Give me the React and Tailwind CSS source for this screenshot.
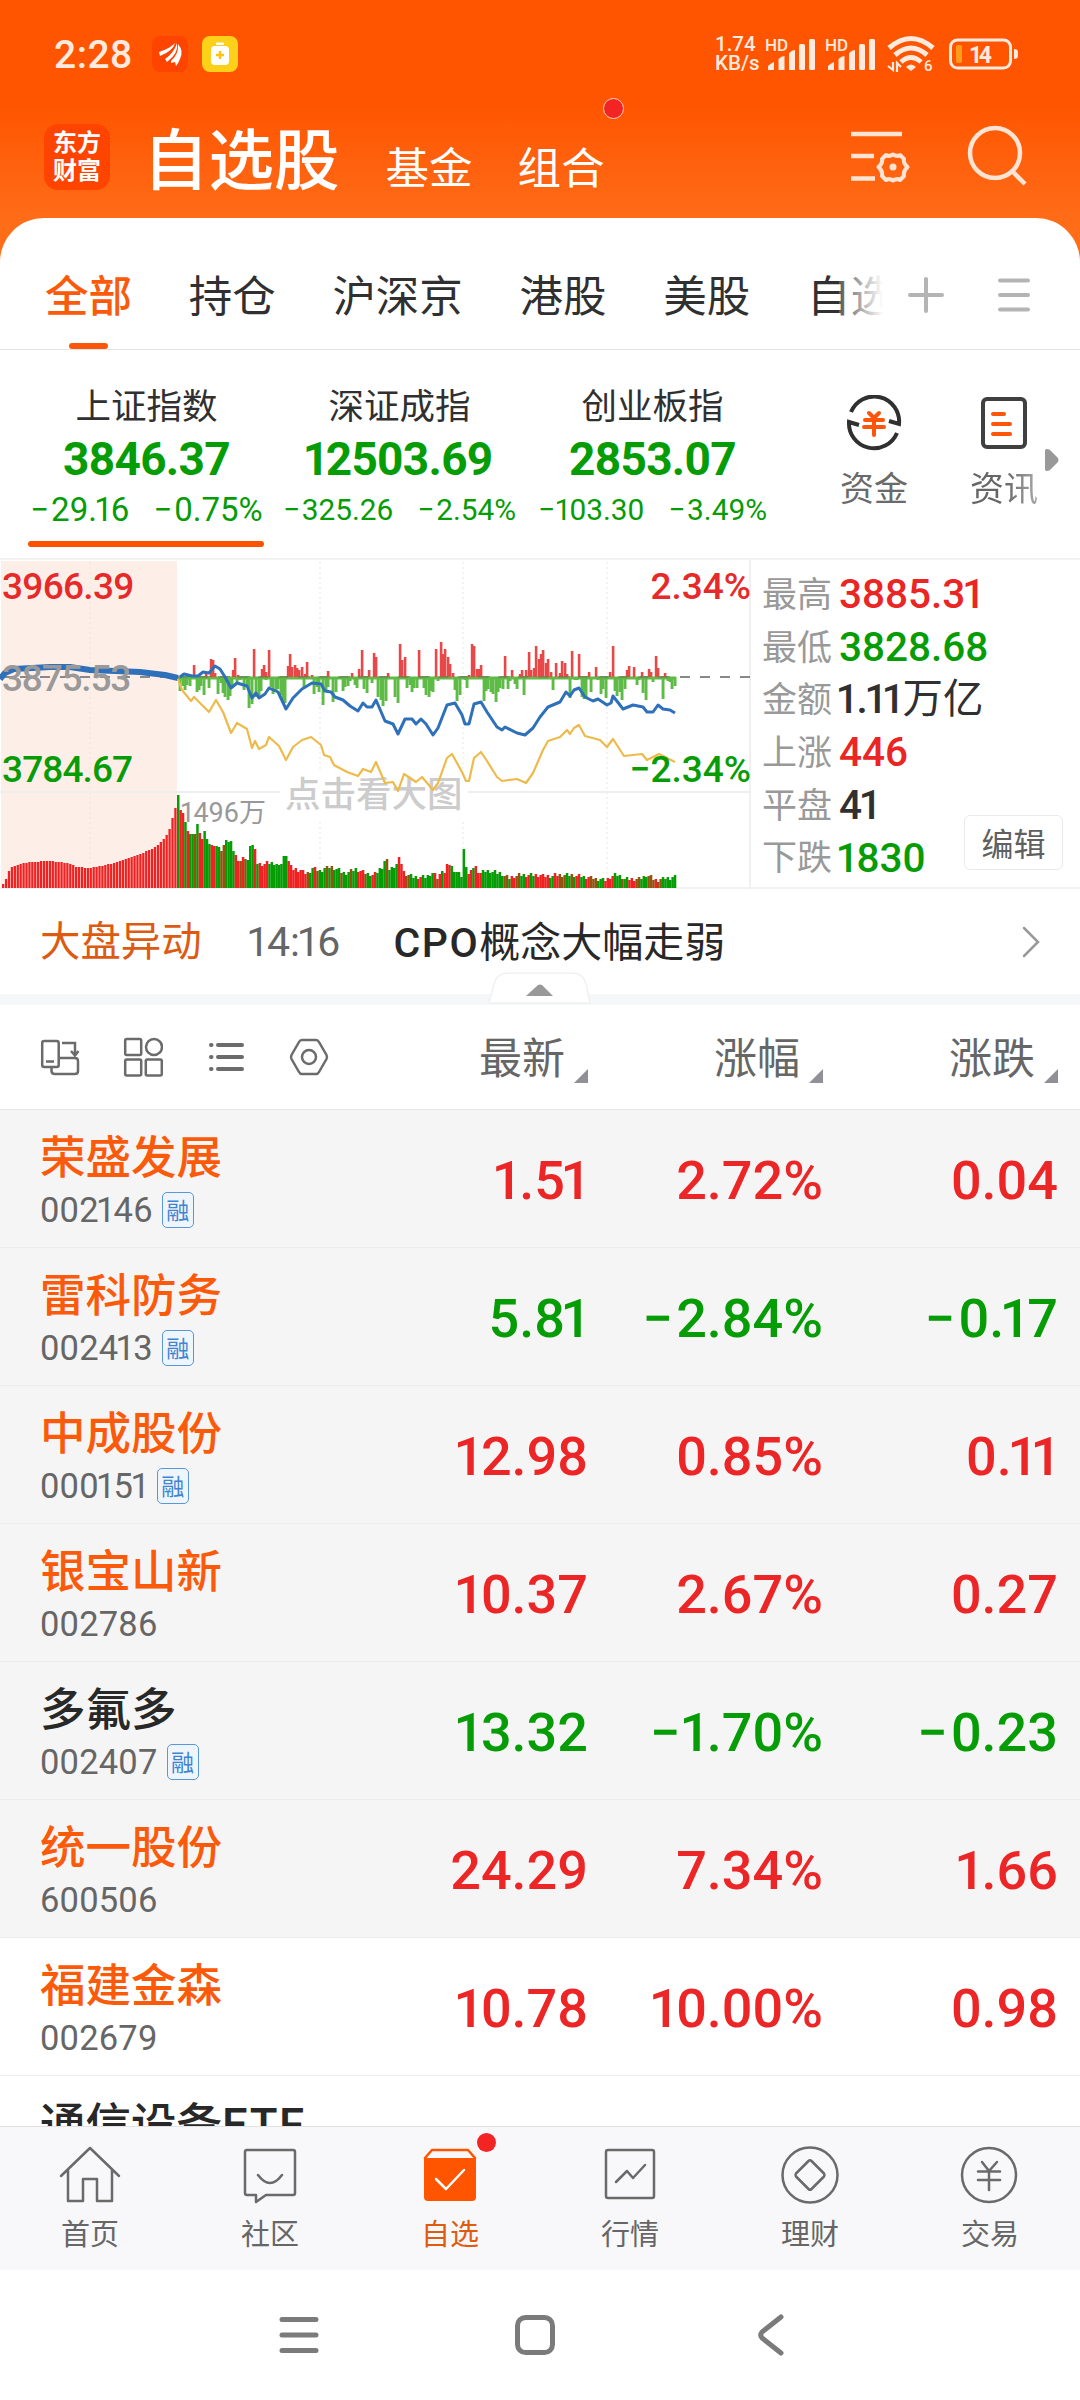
import clsx from 'clsx'

// ── Data ──────────────────────────────────────────────────────
const tabs = ['全部', '持仓', '沪深京', '港股', '美股', '自选']

const indexes = [
  { name: '上证指数', value: '3846.37', diff: '−29.16', pct: '−0.75%', active: true },
  { name: '深证成指', value: '12503.69', diff: '−325.26', pct: '−2.54%' },
  { name: '创业板指', value: '2853.07', diff: '−103.30', pct: '−3.49%' },
]

const stats = [
  { label: '最高', value: '3885.31', color: 'text-[#eb2424]' },
  { label: '最低', value: '3828.68', color: 'text-[#069c06]' },
  { label: '金额', value: '1.11', unit: '万亿', color: 'text-[#303030]' },
  { label: '上涨', value: '446', color: 'text-[#eb2424]' },
  { label: '平盘', value: '41', color: 'text-[#303030]' },
  { label: '下跌', value: '1830', color: 'text-[#069c06]' },
]

const stocks = [
  { name: '荣盛发展', code: '002146', margin: true, price: '1.51', pct: '2.72%', diff: '0.04', hot: true },
  { name: '雷科防务', code: '002413', margin: true, price: '5.81', pct: '−2.84%', diff: '−0.17', hot: true },
  { name: '中成股份', code: '000151', margin: true, price: '12.98', pct: '0.85%', diff: '0.11', hot: true },
  { name: '银宝山新', code: '002786', price: '10.37', pct: '2.67%', diff: '0.27', hot: true },
  { name: '多氟多', code: '002407', margin: true, price: '13.32', pct: '−1.70%', diff: '−0.23' },
  { name: '统一股份', code: '600506', price: '24.29', pct: '7.34%', diff: '1.66', hot: true },
  { name: '福建金森', code: '002679', price: '10.78', pct: '10.00%', diff: '0.98', hot: true, plain: true },
]

const pricePath = '180,117 184,114 192,116 198,116 203,112 209,113 215,106 220,109 225,117 231,128 237,123 247,126 252,138 256,133 259,138 265,134 269,128 278,132 286,149 293,138 302,129 312,123 321,124 325,131 331,132 335,137 343,140 350,146 358,151 363,143 367,147 372,147 376,140 385,161 393,164 398,174 405,159 412,159 416,164 421,159 426,164 433,175 438,168 447,145 455,143 462,155 465,164 469,164 474,144 481,142 487,152 497,167 502,170 505,167 517,173 525,175 533,168 540,157 548,147 560,142 566,132 570,136 574,130 579,128 585,137 593,141 598,139 607,145 611,143 613,136 623,149 633,145 643,147 647,152 653,152 658,145 663,149 670,150 675,153'
const avgPath = '178,119 182,130 191,141 194,137 202,145 209,152 216,140 223,152 231,173 237,163 247,169 252,188 255,181 259,189 266,185 269,177 279,186 286,200 293,187 302,180 311,177 321,185 324,195 330,197 334,205 347,212 358,216 363,209 371,212 376,202 385,223 393,222 398,231 404,214 416,222 422,217 433,230 438,223 447,198 452,194 462,212 466,221 469,221 474,198 481,192 487,201 497,217 502,221 517,219 526,223 533,213 543,190 548,181 560,177 567,170 570,174 574,168 579,165 585,176 600,180 607,187 613,179 624,196 642,194 647,200 659,194 675,202'

// [x, height] of the momentum bars above and below the zero line
const upBars = [[194, 12], [206, 4], [211, 18], [213, 17], [215, 4], [233, 7], [235, 19], [238, 2], [254, 28], [262, 8], [264, 12], [266, 5], [269, 27], [288, 11], [290, 23], [292, 10], [295, 12], [297, 9], [299, 7], [302, 10], [305, 3], [307, 15], [312, 2], [328, 6], [352, 4], [359, 8], [362, 27], [369, 7], [374, 24], [376, 20], [388, 4], [400, 33], [402, 17], [405, 20], [419, 27], [436, 28], [441, 35], [443, 23], [445, 28], [448, 20], [450, 13], [453, 4], [469, 2], [472, 33], [474, 31], [477, 8], [479, 8], [481, 12], [505, 21], [512, 7], [520, 3], [522, 7], [526, 7], [529, 25], [531, 7], [534, 9], [536, 31], [539, 18], [541, 23], [543, 27], [546, 14], [548, 18], [551, 5], [556, 14], [560, 4], [562, 16], [565, 14], [567, 3], [572, 26], [579, 23], [589, 5], [596, 10], [610, 5], [613, 31], [627, 7], [629, 11], [634, 10], [642, 5], [649, 8], [651, 5], [656, 21], [658, 9], [665, 4]]
const downBars = [[180, 14], [183, 9], [185, 13], [187, 8], [190, 9], [197, 15], [199, 13], [201, 9], [204, 18], [209, 11], [218, 17], [221, 6], [223, 16], [225, 20], [228, 23], [230, 19], [232, 9], [237, 6], [240, 3], [244, 13], [247, 10], [249, 31], [252, 27], [256, 20], [259, 21], [261, 14], [266, 3], [271, 10], [273, 17], [276, 14], [278, 12], [281, 18], [283, 26], [285, 26], [304, 10], [314, 17], [317, 10], [319, 15], [323, 28], [326, 15], [328, 10], [333, 25], [336, 15], [343, 14], [345, 10], [348, 9], [350, 4], [355, 8], [357, 11], [364, 12], [367, 16], [372, 6], [378, 20], [381, 23], [383, 29], [386, 24], [395, 20], [398, 26], [407, 11], [410, 8], [412, 15], [414, 11], [417, 11], [424, 11], [426, 18], [429, 20], [431, 14], [433, 15], [438, 4], [455, 13], [457, 24], [460, 18], [465, 3], [467, 11], [484, 24], [486, 14], [488, 12], [491, 15], [493, 17], [496, 25], [498, 15], [500, 11], [503, 12], [508, 12], [510, 4], [515, 7], [517, 12], [524, 18], [553, 13], [570, 21], [575, 3], [577, 3], [582, 20], [584, 22], [586, 20], [591, 15], [598, 3], [601, 17], [603, 12], [606, 21], [615, 14], [617, 19], [620, 15], [622, 23], [625, 12], [637, 8], [639, 3], [643, 16], [646, 23], [653, 5], [663, 22], [668, 4], [670, 5], [672, 12], [675, 9]]

// Volume envelope, interpolated to one bar per slot
const preVolume = [[3, 4], [5, 7], [9, 17], [12, 21], [15, 22], [20, 24], [30, 26], [50, 27], [60, 26], [70, 24], [77, 21], [88, 20], [100, 22], [115, 25], [130, 30], [145, 36], [155, 41], [160, 45], [165, 50], [170, 60], [173, 73], [176, 82]]
const volume = [[178, 95], [180, 79], [183, 75], [185, 67], [188, 56], [190, 54], [195, 54], [197, 65], [199, 58], [202, 48], [204, 59], [206, 52], [209, 44], [216, 41], [218, 43], [221, 36], [226, 48], [231, 45], [235, 33], [240, 27], [245, 30], [248, 27], [250, 44], [252, 45], [255, 37], [257, 25], [262, 24], [270, 25], [276, 25], [280, 20], [283, 30], [286, 35], [288, 28], [292, 19], [300, 18], [307, 14], [313, 20], [320, 17], [325, 20], [333, 21], [345, 14], [355, 19], [363, 16], [372, 13], [376, 15], [383, 22], [386, 31], [389, 19], [395, 22], [398, 26], [400, 33], [403, 16], [412, 11], [425, 11], [433, 15], [439, 8], [441, 21], [445, 14], [448, 26], [455, 17], [462, 12], [464, 41], [467, 16], [470, 13], [474, 23], [480, 15], [487, 17], [500, 15], [508, 10], [520, 13], [535, 13], [548, 12], [560, 13], [570, 13], [580, 12], [592, 10], [605, 8], [613, 12], [616, 14], [625, 9], [640, 9], [647, 13], [655, 8], [675, 11]]
const volumeRuns = [[179, 'g'], [184, 'r'], [187, 'g'], [189, 'r'], [194, 'g'], [196, 'b'], [198, 'g'], [203, 'r'], [210, 'g'], [216, 'r'], [221, 'g'], [224, 'b'], [234, 'g'], [239, 'r'], [242, 'b'], [245, 'r'], [247, 'b'], [253, 'g'], [256, 'r'], [259, 'g'], [269, 'r'], [287, 'g'], [307, 'r'], [309, 'b'], [313, 'g'], [315, 'r'], [318, 'b'], [326, 'g'], [328, 'b'], [331, 'g'], [333, 'b'], [339, 'g'], [342, 'b'], [349, 'g'], [351, 'b'], [356, 'g'], [358, 'b'], [364, 'r'], [367, 'b'], [371, 'g'], [376, 'r'], [385, 'g'], [388, 'b'], [398, 'g'], [406, 'r'], [410, 'b'], [418, 'g'], [421, 'r'], [434, 'g'], [437, 'r'], [439, 'b'], [442, 'r'], [444, 'g'], [451, 'r'], [467, 'g'], [472, 'r'], [474, 'g'], [481, 'r'], [503, 'g'], [507, 'b'], [511, 'g'], [515, 'r'], [520, 'b'], [525, 'g'], [530, 'r'], [534, 'g'], [549, 'r'], [554, 'g'], [559, 'r'], [565, 'b'], [570, 'g'], [573, 'b'], [576, 'g'], [581, 'r'], [586, 'g'], [590, 'r'], [596, 'b'], [605, 'g'], [613, 'r'], [620, 'g'], [624, 'b'], [628, 'g'], [635, 'r'], [640, 'b'], [648, 'g'], [654, 'b'], [658, 'r'], [662, 'b'], [690, 'g']]
const volumeColors = { r: '#ee2222', g: '#069c06', b: '#8f5510' }

const sample = (pts, x) => {
  const i = pts.findIndex(p => p[0] >= x)
  if (i === -1) return pts[pts.length - 1][1]
  if (i === 0) return pts[0][1]
  const [x0, y0] = pts[i - 1]
  const [x1, y1] = pts[i]
  return Math.round(y0 + ((y1 - y0) * (x - x0)) / (x1 - x0))
}

// Proportional figures: a narrow 1 and a slightly looser minus
function Num({ children }) {
  return children.split(/([1−])/).map((part, i) => {
    if (part === '1') return <span key={i} className="-ml-[0.08em] -mr-[0.06em]">1</span>
    if (part === '−') return <span key={i} className="mr-[0.06em]">−</span>
    return part
  })
}

// ── Status bar ────────────────────────────────────────────────
function Signal() {
  return (
    <svg viewBox="0 0 52 36" className="h-9 w-[52px] overflow-visible" fill="#ffeadf">
      <text x="-1" y="14.500" fontSize="17" fontWeight="500" fontFamily="Roboto">HD</text>
      <path d="M2 34V30Q5 27 8 26V34ZM12.500 34V23Q15.500 20 18.500 20V34ZM23 34V17Q26 14 29 14V34Z" />
      <rect x="33" y="8" width="6" height="26" rx="1.5" />
      <rect x="43" y="3" width="6" height="31" rx="1.5" />
    </svg>
  )
}

function StatusBar() {
  return (
    <div className="flex h-[108px] items-center pl-[54px] pr-[61px] text-[#ffeadf]">
      <span className="w-[98px] pt-[2px] text-[39px] font-medium leading-none tracking-[0.5px]">2:28</span>
      <svg viewBox="0 0 36 36" className="mr-[14px] size-9">
        <rect width="36" height="36" rx="8" fill="#ff4400" />
        <path d="M7 16Q17 13 23 7Q21 15 8 20ZM13 23Q22 17 25 7Q27 17 15 26ZM19 25Q27 18 26 8Q32 15 28 23Q26 28 24 30L23 26L19 27Z" fill="#fff" />
      </svg>
      <svg viewBox="0 0 36 36" className="size-9">
        <rect width="36" height="36" rx="8" fill="#fdd01a" />
        <rect x="14" y="6.500" width="8" height="2.500" rx="1" fill="#fff" />
        <rect x="9" y="10" width="18" height="19" rx="4" fill="#fff" />
        <path d="M18 15V23M14 19H22" stroke="#fdc60a" strokeWidth="2.500" />
      </svg>
      <div className="ml-auto w-[51px] text-[20.5px] font-medium leading-[19px]">
        <div>1.74</div>
        <div>KB/s</div>
      </div>
      <div className="flex gap-2">
        <Signal />
        <Signal />
      </div>
      <svg viewBox="0 0 50 38" className="ml-[8px] mr-[13px] h-[38px] w-[50px] overflow-visible" fill="none" stroke="#ffeadf" strokeWidth="5">
        <path d="M3 13Q25 -6 47 13" />
        <path d="M9 20Q25 6 41 20" />
        <path d="M15 27Q25 18 35 27" />
        <path d="M20 32Q25 27 30 32L25 36Z" fill="#ffeadf" stroke="none" />
        <path d="M7 27V35L2 31M11 37V28L15 32" strokeWidth="2.200" />
        <text x="38" y="36" fontSize="15" fontWeight="500" fontFamily="Roboto" fill="#ffeadf" stroke="none">6</text>
      </svg>
      <svg viewBox="0 0 70 32" className="h-8 w-[70px]">
        <rect x="1.500" y="2" width="60" height="28" rx="7" fill="none" stroke="#ffeadf" strokeWidth="3" />
        <rect x="7" y="7" width="6" height="18" rx="2" fill="#ff9c1c" />
        <path d="M65 11Q69 11 69 14V18Q69 21 65 21Z" fill="#ffeadf" />
        <text x="20" y="24.500" fontSize="23" fontWeight="700" fontFamily="Roboto" fill="#ffeadf" textLength="23">14</text>
      </svg>
    </div>
  )
}

function Header() {
  return (
    <div className="flex h-[110px] items-center px-11 text-white">
      <div className="mt-[-12px] flex size-[66px] flex-col items-center justify-center rounded-[14px] bg-[#ff4400] text-[24px] font-bold leading-[28px]">
        <div>东方</div>
        <div>财富</div>
      </div>
      <span className="ml-[33px] mt-[-3px] text-[65.5px] font-medium leading-none">自选股</span>
      <span className="ml-[46px] mt-[14px] text-[43.5px] leading-none">基金</span>
      <span className="relative ml-[45px] mt-[14px] text-[43.5px] leading-none">
        组合
        <i className="absolute -right-[19px] -top-[50px] size-[21px] rounded-full border border-[#ffd0c0] bg-[#f22424]" />
      </span>
      <svg viewBox="0 0 60 54" className="ml-auto mt-[-14px] h-[54px] w-[60px]" fill="none" stroke="#ffe3d3" strokeWidth="4.500">
        <path d="M1 5H52M1 27H24M1 49.500H25" />
        <path strokeWidth="4" strokeLinejoin="round" d="M36 26Q39 28 43 25.500Q47 28 50 26L54 30Q53 34 57.500 38Q53 42 54 47L50 51Q47 49 43 51.500Q39 49 36 51L32 47Q33 42 28.500 38Q33 34 32 30Z" />
        <circle cx="43" cy="38" r="3.500" fill="#ffe3d3" stroke="none" />
      </svg>
      <svg viewBox="0 0 60 62" className="ml-[57px] mr-[9px] mt-[-14px] h-[62px] w-[60px]" fill="none" stroke="#ffe3d3" strokeWidth="4.500">
        <circle cx="28" cy="28" r="25" />
        <path d="M45 46L58 59" />
      </svg>
    </div>
  )
}

function Tabs() {
  return (
    <div className="flex h-[132px] border-b border-[#e4e4e4] pl-[45px] pr-[49px]">
      <div className="relative flex w-[838px] gap-[56.7px] overflow-hidden whitespace-nowrap text-[43.5px] text-[#303030]">
        {tabs.map((t, i) => (
          <div key={t} className={clsx('relative shrink-0 pt-[58px] leading-[43px]', i === 0 && 'font-medium text-[#fa5a0a]')}>
            {t}
            {i === 0 && <i className="absolute bottom-0 left-6 h-[6px] w-[39px] rounded-full bg-[#fc560a]" />}
          </div>
        ))}
        <i className="absolute right-0 top-0 h-full w-[44px] bg-gradient-to-r from-white/20 to-white" />
      </div>
      <svg viewBox="0 0 36 36" className="ml-[25px] mt-[59px] size-9" stroke="#b4b4b4" strokeWidth="4" strokeLinecap="round">
        <path d="M2 18H34M18 2V34" />
      </svg>
      <svg viewBox="0 0 34 34" className="ml-auto mt-[60px] size-[34px]" stroke="#b4b4b4" strokeWidth="4" strokeLinecap="round">
        <path d="M3 2.500H31M3 17H31M3 31.500H31" />
      </svg>
    </div>
  )
}

// ── Indexes ───────────────────────────────────────────────────
function IndexCard({ item }) {
  return (
    <div className="relative flex w-[253px] flex-col items-center">
      <div className="mt-[39px] text-[35.5px] leading-[36px] text-[#303030]">{item.name}</div>
      <div className="mt-[11px] text-[46px] font-bold leading-[46px] tracking-[-0.7px] text-[#069c06]"><Num>{item.value}</Num></div>
      <div className={clsx('mt-[10px] flex leading-[36px] text-[#069c06]', item.active ? 'gap-[24px] text-[33px]' : 'gap-[24px] text-[29.8px]')}>
        <span><Num>{item.diff}</Num></span>
        <span><Num>{item.pct}</Num></span>
      </div>
      {item.active && <i className="absolute bottom-[11px] left-2 h-[6px] w-[236px] rounded-full bg-[#ff5200]" />}
    </div>
  )
}

function IndexStrip() {
  return (
    <div className="flex h-[210px] border-b-2 border-[#f2f2f2] pl-5">
      {indexes.map(item => <IndexCard key={item.name} item={item} />)}
      <div className="ml-[42px] flex w-[106px] flex-col items-center">
        <svg viewBox="0 0 56 56" className="mt-[45px] size-14" fill="none" stroke="#303030" strokeWidth="4">
          <path d="M5 17A25 25 0 0 1 53 29L43 26" />
          <path d="M51 38A25 25 0 0 1 3 27L13 30" />
          <path d="M23 18L28 23L33 18M19 25H37M18 32H38M28 23V40" stroke="#fc560a" strokeLinecap="round" />
        </svg>
        <div className="mt-[20px] text-[34px] leading-[36px] text-[#6a6a6a]">资金</div>
      </div>
      <div className="ml-[25px] flex w-[104px] flex-col items-center">
        <svg viewBox="0 0 46 52" className="mt-[47px] h-[52px] w-[46px]" fill="none" stroke="#404040" strokeWidth="4">
          <rect x="2" y="2" width="42" height="48" rx="4" />
          <path d="M12 17H23M12 27H29M12 37H29" stroke="#fc560a" strokeLinecap="round" />
        </svg>
        <div className="mt-[22px] bg-gradient-to-r from-[#666] from-50% to-[#aaa] bg-clip-text text-[34px] leading-[36px] text-transparent">资讯</div>
      </div>
      <svg viewBox="0 0 14 24" className="ml-[-11px] mt-[98px] h-6 w-[14px]" fill="#999">
        <path d="M0 2Q2 0 5 2L13 10Q14 12 13 14L5 22Q2 24 0 22Z" />
      </svg>
    </div>
  )
}

// ── Chart ─────────────────────────────────────────────────────
function Chart() {
  const pre = Array.from({ length: 60 }, (_, i) => 2 + i * 2.92)
  const slots = Array.from({ length: 208 }, (_, i) => 177 + i * 2.4)
  return (
    <div className="relative h-[329px] w-[751px] border-r-2 border-[#f0f0f0] text-[37px] leading-none">
      <svg viewBox="0 0 750 329" className="block h-[329px] w-[750px]">
        <rect x="1" y="1" width="176" height="327" fill="#feeee8" />
        <path d="M90 2V328M320 2V328M463 2V328M607 2V328" stroke="#e6e6e6" strokeDasharray="2 3" />
        <path d="M0 232H280M468 232H750" stroke="#eeeeee" strokeWidth="2" />
        <path d="M0 117H750" stroke="#888" strokeWidth="2" strokeDasharray="10 10" />
        <rect x="280" y="212" width="188" height="48" fill="#fff" />
        <rect x="178" y="116.500" width="498" height="3" fill="#5dbb46" />
        {upBars.map(([x, h]) => <rect key={x} x={x - 1.200} y={117 - h} width="2.600" height={h} fill="#e84848" />)}
        {downBars.map(([x, h]) => <rect key={x} x={x - 1.400} y={117} width="2.900" height={h} fill="#5dbb46" />)}
        <path d="M178 117H676" stroke="#6b7a50" strokeWidth="1" strokeDasharray="10 10" />
        {pre.map(x => {
          const h = sample(preVolume, x + 1)
          return <rect key={x} x={x} y={328 - h} width="2.300" height={h} fill="#ee2222" />
        })}
        {slots.map((x, i) => {
          const h = Math.max(6, sample(volume, x + 1.200) + (i > 20 ? ((i * 7) % 5) - 2 : 0))
          const run = volumeRuns.find(r => r[0] >= x + 1.200)
          return <rect key={x} x={x} y={328 - h} width="2.500" height={h} fill={volumeColors[run[1]]} />
        })}
      </svg>
      <span className="absolute left-[285px] top-[218px] text-[35.5px] font-medium text-[#cccccc]">点击看大图</span>
      <svg viewBox="0 0 750 329" className="absolute left-0 top-0 h-[329px] w-[750px]" fill="none" strokeLinejoin="round">
        <polyline points="0,119 5,113 14,109 50,107 70,107 90,110 140,112 165,115 178,118" stroke="#2f70ba" strokeWidth="6" />
        <polyline points={avgPath} stroke="#edbb4b" strokeWidth="2.200" />
        <polyline points={pricePath} stroke="#2f70ba" strokeWidth="3" />
      </svg>
      <span className="absolute left-[2px] top-[8px] font-medium tracking-[-0.7px] text-[#e62a2a]">3966.39</span>
      <span className="absolute left-[2px] top-[100px] font-medium tracking-[-1.2px] text-[#999]">3875.53</span>
      <span className="absolute left-[2px] top-[191px] font-medium tracking-[-0.9px] text-[#069c06]">3784.67</span>
      <span className="absolute left-[182px] top-[240px] text-[27px] text-[#999]"><Num>1496</Num>万</span>
      <span className="absolute right-[-2px] top-[8px] font-medium text-[#e62a2a]">2.34%</span>
      <span className="absolute right-[-2px] top-[191px] font-medium text-[#069c06]">−2.34%</span>
    </div>
  )
}

function Stats() {
  return (
    <div className="relative flex-1 pl-[11px] pt-[8px]">
      {stats.map(s => (
        <div key={s.label} className="flex h-[52.7px] items-center leading-none">
          <span className="w-[77px] pt-[2px] text-[35px] text-[#999]">{s.label}</span>
          <span className={clsx('text-[40.5px] font-medium', s.color)}>
            <Num>{s.value}</Num>
            {s.unit && <span className="font-normal">{s.unit}</span>}
          </span>
        </div>
      ))}
      <button className="absolute bottom-[17px] right-[17px] h-[55px] w-[99px] rounded-md border border-[#eaeaea] bg-white pt-[5px] text-[32px] leading-none text-[#606060]">编辑</button>
    </div>
  )
}

function NewsBar() {
  return (
    <div className="relative h-[116px] border-b-[11px] border-[#f6f7f9]">
      <div className="flex h-[106px] items-center pl-[40px] text-[40.4px] leading-none">
        <span className="pt-[3px] text-[#dd5a12]">大盘异动</span>
        <span className="ml-[48px] w-[144px] pt-px text-[41px] text-[#666]"><Num>14:16</Num></span>
        <span className="pt-[3px] text-[41px] text-[#282828]"><b className="font-medium tracking-[1.5px]">CPO</b>概念大幅走弱</span>
        <svg viewBox="0 0 18 32" className="ml-auto mr-[40px] h-8 w-[18px]" fill="none" stroke="#999" strokeWidth="2.500" strokeLinecap="round">
          <path d="M2 2L16 16L2 30" />
        </svg>
      </div>
      <svg viewBox="0 0 104 32" className="absolute left-[488px] top-[83px] h-8 w-[104px]">
        <path d="M1 31L6 12Q9 1 20 1H84Q95 1 98 12L102 31Z" fill="#fff" stroke="#f0f1f3" strokeWidth="1.500" />
        <path d="M38 24L50 13Q52 12 54 13L65 24Z" fill="#999" />
      </svg>
    </div>
  )
}

// ── Stock table ───────────────────────────────────────────────
function TableHead() {
  return (
    <div className="flex h-[105px] items-center border-b border-[#e6e6e6] pl-[40px]">
      <div className="flex w-[346px] gap-[43px]">
        <svg viewBox="0 0 40 40" className="size-10" fill="none" stroke="#6b6b6b" strokeWidth="2.500">
          <rect x="2.200" y="4" width="16.500" height="26" rx="2" />
          <path d="M6 24.500H14M18.700 21H35Q38 21 38 24V34Q38 37 35 37H15Q11.500 37 11.500 34V30M22 6H35V17M31 14L35 18.500L38.500 14" />
        </svg>
        <svg viewBox="0 0 40 40" className="size-10" fill="none" stroke="#6b6b6b" strokeWidth="2.500">
          <rect x="2.200" y="2" width="16" height="16" rx="1.500" />
          <circle cx="31" cy="10" r="8" />
          <rect x="2.200" y="22.500" width="16" height="16" rx="1.500" />
          <rect x="22.800" y="22.500" width="16" height="16" rx="1.500" />
        </svg>
        <svg viewBox="0 0 40 40" className="size-10" stroke="#6b6b6b" strokeWidth="4" strokeLinecap="round">
          <path d="M5 8H5.500M12 8H36M5 20H5.500M12 20H36M5 32H5.500M12 32H36" />
        </svg>
        <svg viewBox="0 0 40 40" className="size-10" fill="none" stroke="#6b6b6b" strokeWidth="2.500">
          <path d="M13 3H27Q29 3 30 5L37.500 18Q38.500 20 37.500 22L30 35Q29 37 27 37H13Q11 37 10 35L2.500 22Q1.500 20 2.500 18L10 5Q11 3 13 3Z" />
          <circle cx="20" cy="20" r="7" />
        </svg>
      </div>
      {['最新', '涨幅', '涨跌'].map((h, i) => (
        <div key={h} className={clsx('flex items-center justify-end text-[43px] leading-none text-[#666]', i === 0 ? 'w-[202px]' : 'w-[235px]')}>
          <span className="pt-[5px]">{h}</span>
          <svg viewBox="0 0 14 14" className="ml-[9px] mt-[38px] size-[14px]" fill="#909096"><path d="M14 0V14H0Z" /></svg>
        </div>
      ))}
    </div>
  )
}

function StockRow({ stock }) {
  const color = stock.diff.startsWith('−') ? 'text-[#069c06]' : 'text-[#ec2626]'
  return (
    <div className={clsx('grid h-[138px] grid-cols-[346px_202px_235px_235px] items-center border-b border-[#ececec] pl-[40px] pt-[4px]', stock.plain ? 'bg-white' : 'bg-[#f5f5f5]')}>
      <div>
        <div className={clsx('text-[45.5px] font-medium leading-[52px]', stock.hot ? 'text-[#fb5a0b]' : 'text-[#282828]')}>{stock.name}</div>
        <div className="mt-[7px] flex h-9 items-center text-[34.5px] leading-none tracking-[0.2px] text-[#666]">
          <span className="pt-px"><Num>{stock.code}</Num></span>
          {stock.margin && (
            <span className="ml-[9px] flex h-9 w-8 items-center justify-center rounded-[5px] border-[1.500px] border-[#5b97d6] bg-[#eef5fd] pt-[2px] text-[23px] text-[#4084d0]">融</span>
          )}
        </div>
      </div>
      {[stock.price, stock.pct, stock.diff].map((v, i) => (
        <div key={i} className={clsx('whitespace-nowrap text-right text-[54px] font-medium leading-none', color)}><Num>{v}</Num></div>
      ))}
    </div>
  )
}

// ── Bottom navigation ─────────────────────────────────────────
const navItems = [
  {
    label: '首页',
    icon: <path d="M1 29L30 1L59 29M8 23V54H23V32H37V54H52V23" />,
  },
  {
    label: '社区',
    icon: <path d="M7 3H53Q55 3 55 5V46Q55 48 53 48H26L16 55V48H7Q5 48 5 46V5Q5 3 7 3ZM18 28Q30 44 42 28" />,
  },
  {
    label: '自选',
    active: true,
    icon: (
      <>
        <path d="M4 11H56V50Q56 54 52 54H8Q4 54 4 50Z" fill="#ff5500" stroke="none" />
        <path d="M5 11L12 3H48L55 11" stroke="#ff5500" />
        <path d="M16 32L26 42L44 23" stroke="#fff" strokeWidth="2.500" />
      </>
    ),
  },
  {
    label: '行情',
    icon: <path d="M8 3H52Q54 3 54 5V49Q54 51 52 51H8Q6 51 6 49V5Q6 3 8 3ZM16 35L27 24L33 31L45 18" />,
  },
  {
    label: '理财',
    icon: (
      <>
        <circle cx="30" cy="28" r="27.500" />
        <path d="M28.500 14Q30 12.500 31.500 14L44 26.500Q45 28 44 29.500L31.500 42Q30 43.500 28.500 42L16 29.500Q15 28 16 26.500Z" />
      </>
    ),
  },
  {
    label: '交易',
    icon: (
      <>
        <circle cx="29" cy="28" r="27" />
        <path d="M22 15L29 24L37 15M18 24.500H40M18 33H40M29 24V43" />
      </>
    ),
  },
]

function BottomNav() {
  return (
    <nav className="grid h-[144px] grid-cols-6 border-t border-[#e2e2e4] bg-[#f8f8fa]">
      {navItems.map(({ label, icon, active }) => (
        <div key={label} className={clsx('flex flex-col items-center pt-[20px] text-[29px] leading-none', active ? 'text-[#e05a10]' : 'text-[#666]')}>
          <div className="relative">
            <svg viewBox="0 0 60 56" className="h-14 w-[60px] overflow-visible" fill="none" stroke="#6a6a6a" strokeWidth="2.500" strokeLinejoin="round" strokeLinecap="round">
              {icon}
            </svg>
            {active && <i className="absolute -right-[16px] -top-[14px] size-[19px] rounded-full bg-[#f22424]" />}
          </div>
          <div className="mt-[18px]">{label}</div>
        </div>
      ))}
    </nav>
  )
}

function SystemNav() {
  return (
    <div className="flex h-[130px] items-center pl-[278px]">
      <svg viewBox="0 0 42 42" className="size-[42px]" stroke="#7b7b7b" strokeWidth="5" strokeLinecap="round">
        <path d="M4 5.500H38M4 21H38M4 36.500H38" />
      </svg>
      <svg viewBox="0 0 42 42" className="ml-[194px] size-[42px]" fill="none" stroke="#7b7b7b" strokeWidth="5">
        <rect x="3.500" y="3.500" width="35" height="35" rx="8" />
      </svg>
      <svg viewBox="0 0 30 42" className="ml-[201px] h-[42px] w-[30px]" fill="none" stroke="#7b7b7b" strokeWidth="5" strokeLinecap="round">
        <path d="M24 3L5 18Q2.500 21 5 24L24 39" />
      </svg>
    </div>
  )
}

export default function App() {
  return (
    <div className="flex h-[2400px] w-[1080px] flex-col overflow-hidden bg-white font-['Roboto','Noto_Sans_CJK_SC',sans-serif]">
      <div className="h-[349px] shrink-0 bg-linear-to-b from-[#ff5500] from-30% to-[#ff6d18] to-65%">
        <StatusBar />
        <Header />
        <div className="rounded-t-[44px] bg-white"><Tabs /></div>
      </div>
      <div className="mt-px shrink-0">
        <IndexStrip />
        <div className="flex h-[329px] border-b-2 border-[#f2f2f2]">
          <Chart />
          <Stats />
        </div>
        <NewsBar />
        <TableHead />
      </div>
      <div className="min-h-0 flex-1 overflow-hidden">
        {stocks.map(s => <StockRow key={s.code} stock={s} />)}
        <div className="pl-[40px] pt-[24px] text-[45.5px] font-medium leading-[52px] text-[#282828]">通信设备<span className="tracking-[1.5px]">ETF</span></div>
      </div>
      <div className="shrink-0">
        <BottomNav />
        <SystemNav />
      </div>
    </div>
  )
}
